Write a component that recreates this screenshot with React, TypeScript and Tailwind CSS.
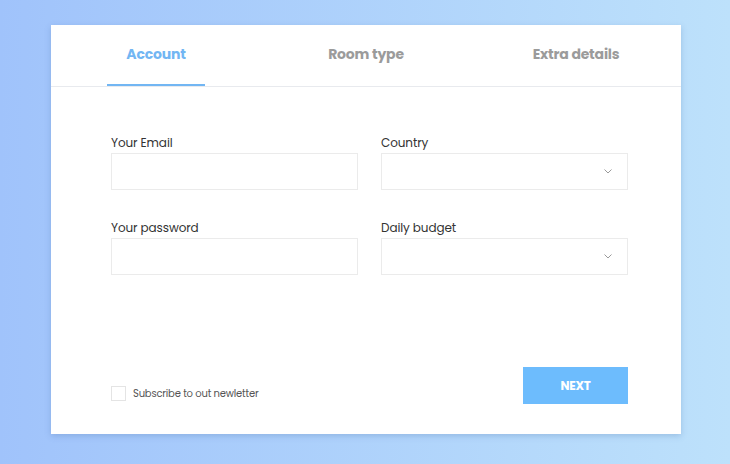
import React from "react";

function Chevron() {
  return (
    <svg width="8" height="5" viewBox="0 0 8 5" fill="none">
      <path d="M0.5 0.5L4 4L7.5 0.5" stroke="#9a9a9a" strokeWidth="1" />
    </svg>
  );
}

export default function App() {
  const font = { fontFamily: "Poppins, 'Open Sans', 'Noto Sans', sans-serif" };
  return (
    <div
      className="w-[730px] h-[464px] bg-gradient-to-r from-[#a0c3fb] to-[#bde1fb] pt-[25px] pl-[51px]"
      style={font}
    >
      <div className="w-[630px] h-[409px] bg-white shadow-[0_2px_6px_rgba(60,100,160,0.25)] flex flex-col">
        <div className="flex h-[62px] border-b border-[#e8eaee]">
          {["Account", "Room type", "Extra details"].map((t, i) => (
            <div key={t} className="flex-1 flex flex-col items-center">
              <div
                className={`pt-[19px] h-[59px] text-[14px] font-bold tracking-[-0.2px] ${
                  i === 0 ? "text-[#72b6f3]" : "text-[#9b9b9b]"
                }`}
              >
                {t}
              </div>
              {i === 0 && <div className="w-[98px] h-[2px] bg-[#72b6f3]" />}
            </div>
          ))}
        </div>
        <div className="pl-[60px] pr-[53px] pt-[49px] grid grid-cols-2 gap-x-[23px] gap-y-[31px]">
          {["Your Email", "Country", "Your password", "Daily budget"].map((l, i) => (
            <div key={l} className="flex flex-col">
              <div className="text-[12px] text-[#333] leading-[14px] mb-[3px] tracking-[-0.1px]">{l}</div>
              <div className="h-[37px] border border-[#ebebeb] flex items-center justify-end pr-[15px]">
                {i % 2 === 1 && <Chevron />}
              </div>
            </div>
          ))}
        </div>
        <div className="mt-auto pl-[60px] pr-[53px] pb-[30px] flex items-end justify-between">
          <div className="flex items-center gap-[7px] mb-[3px]">
            <div className="w-[15px] h-[15px] border border-[#e4e4e4]" />
            <span className="text-[10px] text-[#555] tracking-[-0.2px]">Subscribe to out newletter</span>
          </div>
          <div className="w-[105px] h-[37px] bg-[#6dbcfd] text-white text-[12px] font-bold flex items-center justify-center tracking-[-0.3px]">
            NEXT
          </div>
        </div>
      </div>
    </div>
  );
}
